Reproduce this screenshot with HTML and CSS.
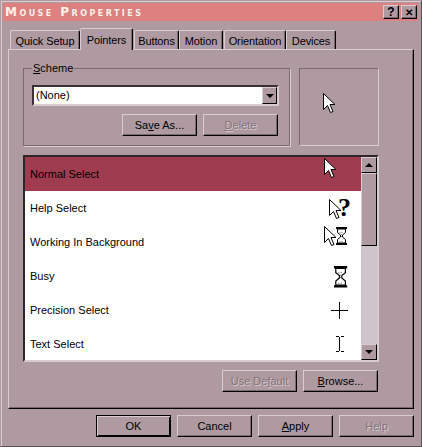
FILE: index.html
```html
<!DOCTYPE html>
<html lang="en">
<head>
  <meta charset="UTF-8">
  <title>Mouse Properties</title>
  <link rel="stylesheet" href="styles.css">
</head>
<body>
  <svg class="defs" width="0" height="0">
    <defs>
      <path id="arrow" d="M.5 .5V16.5L4.5 12.5L7.5 19.5L10 18.5L7 11.5H12Z" fill="#fff" stroke="#000"/>
      <g id="glass" fill="#fff" stroke="#000">
        <path d="M1.500 2V5.500L4.500 8V10L1.500 12.500V16H9.500V12.500L6.500 10V8L9.500 5.500V2Z"/>
        <path d="M0 1H11M0 17H11" stroke-width="2"/>
        <path d="M3.500 5.500H7.500M5.500 7V10.500M3.500 14.500H7.500" stroke="#888" stroke-dasharray="1"/>
      </g>
    </defs>
  </svg>

  <div class="window">
    <div class="titlebar">
      <span class="title">Mouse Properties</span>
      <span class="title-buttons">
        <span class="title-btn">?</span>
        <span class="title-btn close">✕</span>
      </span>
    </div>

    <div class="tabs">
      <span class="tab">Quick Setup</span>
      <span class="tab active">Pointers</span>
      <span class="tab">Buttons</span>
      <span class="tab">Motion</span>
      <span class="tab">Orientation</span>
      <span class="tab">Devices</span>
    </div>

    <div class="panel">
      <div class="top-row">
        <fieldset class="scheme">
          <legend><u>S</u>cheme</legend>
          <div class="combo">
            <span class="combo-text">(None)</span>
            <span class="combo-btn"><i class="tri"></i></span>
          </div>
          <div class="btn-row">
            <span class="btn">Sa<u>v</u>e As...</span>
            <span class="btn disabled"><u>D</u>elete</span>
          </div>
        </fieldset>
        <div class="preview">
          <svg width="14" height="21"><use href="#arrow"/></svg>
        </div>
      </div>

      <div class="list">
        <div class="rows">
          <div class="row selected">
            <span>Normal Select</span>
            <svg class="cur" width="32" height="32"><use href="#arrow"/></svg>
          </div>
          <div class="row">
            <span>Help Select</span>
            <svg class="cur" width="32" height="32">
              <use href="#arrow" x="5" y="7"/>
              <text x="14" y="24" class="qmark">?</text>
            </svg>
          </div>
          <div class="row">
            <span>Working In Background</span>
            <svg class="cur" width="32" height="32">
              <use href="#arrow"/>
              <use href="#glass" x="12" y="1"/>
            </svg>
          </div>
          <div class="row">
            <span>Busy</span>
            <svg class="cur" width="32" height="32">
              <g transform="translate(10 6) scale(1.200)"><use href="#glass"/></g>
            </svg>
          </div>
          <div class="row">
            <span>Precision Select</span>
            <svg class="cur" width="32" height="32">
              <path d="M7 16.500H24M15.500 8V25" stroke="#000" fill="none"/>
            </svg>
          </div>
          <div class="row">
            <span>Text Select</span>
            <svg class="cur" width="32" height="32">
              <path d="M12 8.500H15M17 8.500H20M12 23.500H15M17 23.500H20M15.500 9V23" stroke="#000" fill="none"/>
            </svg>
          </div>
        </div>
        <div class="scrollbar">
          <span class="sb-btn"><i class="tri up"></i></span>
          <span class="sb-thumb"></span>
          <span class="sb-track"></span>
          <span class="sb-btn"><i class="tri"></i></span>
        </div>
      </div>

      <div class="btn-row list-btns">
        <span class="btn disabled">Use De<u>f</u>ault</span>
        <span class="btn"><u>B</u>rowse...</span>
      </div>
    </div>

    <div class="btn-row footer">
      <span class="btn default">OK</span>
      <span class="btn">Cancel</span>
      <span class="btn"><u>A</u>pply</span>
      <span class="btn disabled">Help</span>
    </div>
  </div>
</body>
</html>
```

FILE: styles.css
```css
* { box-sizing: border-box; }
body { margin: 0; background: #ae9aa0; font-family: "Liberation Sans", Arial, sans-serif; font-size: 11px; color: #000; }
.defs { position: absolute; }

.window { width: 422px; height: 447px; padding: 3px 3px 0; background: #ae9aa0; border-top: 1px solid #ae9aa0; border-left: 1px solid #ae9aa0; border-right: 1px solid #5c5054; border-bottom: 1px solid #5c5054; box-shadow: inset 1px 1px 0 #d8ccd2; }

.titlebar { height: 18px; display: flex; align-items: center; justify-content: space-between; padding: 0 1px 0 2px; background: #dd8080; margin-top: -1px; margin-left: -1px; }
.title { font-family: "DejaVu Sans", sans-serif; font-weight: bold; font-variant: small-caps; font-size: 12px; letter-spacing: 2.45px; color: #fdf2e8; }
.title-buttons { display: flex; gap: 2px; }
.title-btn { width: 16px; height: 14px; display: flex; align-items: center; justify-content: center; background: #ae9aa0; font-weight: bold; font-size: 12px; border: 1px solid; border-color: #d8ccd2 #000 #000 #d8ccd2; box-shadow: inset -1px -1px 0 #7a6a70; }
.close { font-size: 10px; }

.tabs { display: flex; align-items: flex-end; height: 21px; margin-top: 7px; margin-left: 6px; position: relative; z-index: 1; }
.tab { flex: none; height: 19px; padding-top: 4px; text-align: center; letter-spacing: -.1px; border: 1px solid; border-bottom: 0; border-color: #d8ccd2 #000 transparent #d8ccd2; border-radius: 2px 2px 0 0; box-shadow: inset -1px 0 0 #7a6a70; white-space: nowrap; }
.tab:nth-child(1) { width: 70px; }
.tab:nth-child(2) { width: 53px; }
.tab:nth-child(3) { width: 45px; margin-left: 1px; }
.tab:nth-child(4) { width: 44px; }
.tab:nth-child(5) { width: 62px; margin-left: 1px; }
.tab:nth-child(6) { width: 50px; }
.tab.active { height: 22px; padding-top: 5px; background: #ae9aa0; margin-bottom: -1px; }

.panel { width: 406px; height: 360px; margin-left: 4px; padding: 18px 0 0 14px; border: 1px solid; border-color: #d8ccd2 #000 #000 #d8ccd2; box-shadow: inset -1px -1px 0 #7a6a70; }

.top-row { display: flex; gap: 9px; height: 78px; }
.scheme { flex: none; width: 267px; min-width: 0; height: 84px; margin: -6px 0 0; padding: 7px 10px 0 8px; border: 1px solid #7a6a70; box-shadow: 1px 1px 0 #d8ccd2; }
.scheme legend { padding: 0 1px; margin-left: 0; background: #ae9aa0; line-height: 13px; }
.preview { flex: none; width: 80px; height: 78px; padding: 24px 0 0 23px; border: 1px solid; border-color: #7a6a70 #d8ccd2 #d8ccd2 #7a6a70; }

.combo { height: 21px; width: 247px; margin-top: 3px; display: flex; justify-content: space-between; background: #fff; border: 2px solid; border-color: #3a3034 #d8ccd2 #d8ccd2 #3a3034; }
.combo-text { padding: 2px 0 0 2px; }
.combo-btn { width: 15px; height: 17px; display: flex; align-items: center; justify-content: center; background: #ae9aa0; border: 1px solid; border-color: #d8ccd2 #000 #000 #d8ccd2; }
.tri { width: 0; height: 0; border-left: 4px solid transparent; border-right: 4px solid transparent; border-top: 4px solid #000; }
.tri.up { border-top: 0; border-bottom: 4px solid #000; }

.btn-row { display: flex; justify-content: flex-end; gap: 6px; }
.scheme .btn-row { margin-top: 8px; margin-right: 1px; }
.btn { width: 75px; height: 22px; display: flex; align-items: center; justify-content: center; background: #ae9aa0; border: 1px solid; border-color: #d8ccd2 #000 #000 #d8ccd2; box-shadow: inset -1px -1px 0 #7a6a70; }
.disabled { color: #84737a; text-shadow: 1px 1px 0 #d8ccd2; }
.default { border-color: #000; box-shadow: inset 1px 1px 0 #d8ccd2, inset -1px -1px 0 #000; }

.list { display: flex; width: 356px; height: 207px; margin-top: 9px; background: #fff; border: 2px solid; border-color: #2e2629 #d8ccd2 #d8ccd2 #2e2629; overflow: hidden; }
.rows { flex: 1; height: 204px; overflow: hidden; }
.row { height: 34px; display: flex; justify-content: space-between; padding: 1px 5px 0 5px; background: #fff; line-height: 33px; }
.row.selected { background: #a03c50; }
.cur { flex: none; }
.qmark { font-family: "Liberation Serif", serif; font-weight: bold; font-size: 26px; fill: #000; }

.scrollbar { width: 16px; height: 203px; display: flex; flex-direction: column; flex: none; background: #d0c4cc; }
.sb-btn, .sb-thumb { background: #ae9aa0; border: 1px solid; border-color: #d8ccd2 #000 #000 #d8ccd2; }
.sb-btn { height: 16px; flex: none; display: flex; align-items: center; justify-content: center; }
.sb-thumb { height: 73px; flex: none; }
.sb-track { flex: 1; }

.list-btns { width: 355px; margin-top: 8px; }
.footer { width: 410px; margin-top: 6px; }
```
